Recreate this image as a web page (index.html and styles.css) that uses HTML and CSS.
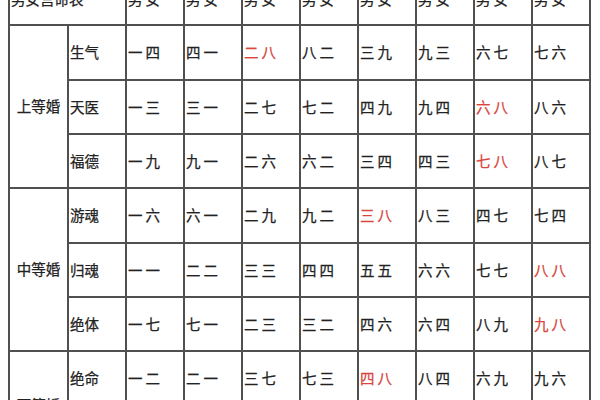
FILE: index.html
```html
<!DOCTYPE html>
<html lang="zh-CN">
<head>
<meta charset="utf-8">
<title>男女宫命表</title>
<link rel="stylesheet" href="styles.css">
</head>
<body>
<table class="chart">
  <colgroup>
    <col class="c-rank"><col class="c-gua">
    <col class="c-d"><col class="c-d"><col class="c-d"><col class="c-d">
    <col class="c-d"><col class="c-d"><col class="c-d"><col class="c-d">
  </colgroup>
  <thead>
    <tr class="head">
      <th colspan="2" class="title">男女宫命表</th>
      <th class="d">男女</th><th class="d">男女</th><th class="d">男女</th><th class="d">男女</th>
      <th class="d">男女</th><th class="d">男女</th><th class="d">男女</th><th class="d">男女</th>
    </tr>
  </thead>
  <tbody>
    <tr class="r55">
      <td rowspan="3" class="rank">上等婚</td>
      <td class="gua">生气</td>
      <td class="d">一四</td><td class="d">四一</td><td class="d red">二八</td><td class="d">八二</td>
      <td class="d">三九</td><td class="d">九三</td><td class="d">六七</td><td class="d">七六</td>
    </tr>
    <tr class="r54">
      <td class="gua">天医</td>
      <td class="d">一三</td><td class="d">三一</td><td class="d">二七</td><td class="d">七二</td>
      <td class="d">四九</td><td class="d">九四</td><td class="d red">六八</td><td class="d">八六</td>
    </tr>
    <tr class="r54">
      <td class="gua">福德</td>
      <td class="d">一九</td><td class="d">九一</td><td class="d">二六</td><td class="d">六二</td>
      <td class="d">三四</td><td class="d">四三</td><td class="d red">七八</td><td class="d">八七</td>
    </tr>
    <tr class="r55">
      <td rowspan="3" class="rank">中等婚</td>
      <td class="gua">游魂</td>
      <td class="d">一六</td><td class="d">六一</td><td class="d">二九</td><td class="d">九二</td>
      <td class="d red">三八</td><td class="d">八三</td><td class="d">四七</td><td class="d">七四</td>
    </tr>
    <tr class="r54">
      <td class="gua">归魂</td>
      <td class="d">一一</td><td class="d">二二</td><td class="d">三三</td><td class="d">四四</td>
      <td class="d">五五</td><td class="d">六六</td><td class="d">七七</td><td class="d red">八八</td>
    </tr>
    <tr class="r54">
      <td class="gua">绝体</td>
      <td class="d">一七</td><td class="d">七一</td><td class="d">二三</td><td class="d">三二</td>
      <td class="d">四六</td><td class="d">六四</td><td class="d">八九</td><td class="d red">九八</td>
    </tr>
    <tr class="r54">
      <td rowspan="2" class="rank">下等婚</td>
      <td class="gua">绝命</td>
      <td class="d">一二</td><td class="d">二一</td><td class="d">三七</td><td class="d">七三</td>
      <td class="d red">四八</td><td class="d">八四</td><td class="d">六九</td><td class="d">九六</td>
    </tr>
    <tr class="r54">
      <td class="gua">五鬼</td>
      <td class="d">一五</td><td class="d">五一</td><td class="d">二四</td><td class="d">四二</td>
      <td class="d">三六</td><td class="d">六三</td><td class="d">七九</td><td class="d">九七</td>
    </tr>
  </tbody>
</table>
</body>
</html>
```

FILE: styles.css
```css
html, body {
  margin: 0;
  padding: 0;
  background: #ffffff;
}

body {
  font-family: "Noto Sans CJK SC", "Noto Sans", sans-serif;
  font-size: 14.5px;
  color: #222222;
  overflow: hidden;
  -webkit-text-stroke: 0.25px currentColor;
}

.chart {
  border-collapse: collapse;
  table-layout: fixed;
  width: 581px;
  margin: -27px 0 0 8px;
}

.c-rank { width: 59px; }
.c-gua { width: 58px; }
.c-d { width: 58px; }

.chart th,
.chart td {
  border: 2px solid #505050;
  padding: 0 0 0 1px;
  font-weight: normal;
  text-align: left;
  vertical-align: middle;
  white-space: nowrap;
  line-height: 1;
}

.head { height: 51px; }
.r55 { height: 55px; }
.r54 { height: 54px; }

.title {
  padding-left: 0;
}

.d {
  letter-spacing: 3px;
}

.rank {
  text-align: center !important;
  padding: 0 !important;
}

.red {
  color: #d8453d;
}
```
